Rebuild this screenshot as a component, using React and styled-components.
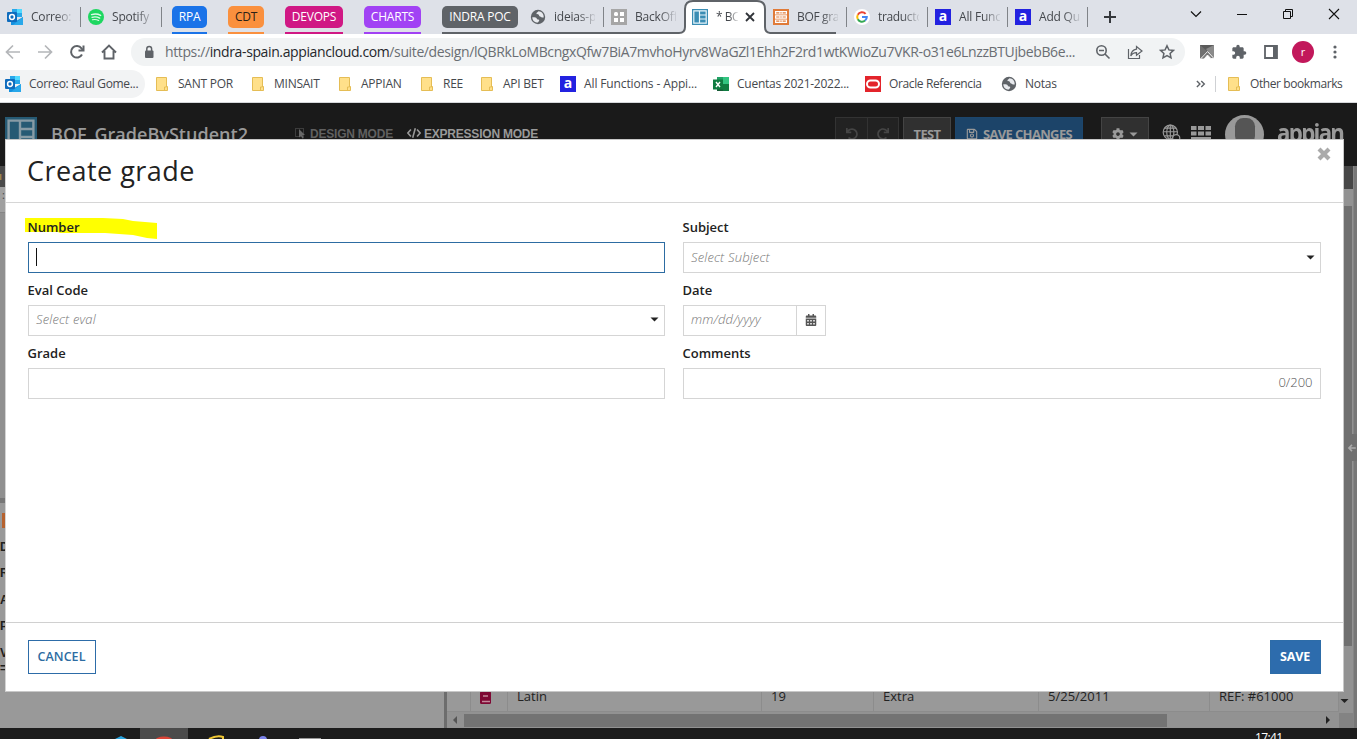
import React from "react";
import styled, { createGlobalStyle, css } from "styled-components";
import { FaCog, FaCalendarAlt, FaRegSave, FaUndo, FaRedo } from "react-icons/fa";
import { MdExtension } from "react-icons/md";

const Global = createGlobalStyle`
  * { box-sizing: border-box; }
  body { margin: 0; overflow: hidden; font-family: "Open Sans", "Liberation Sans", sans-serif; }
  svg { display: block; flex: none; }
  button, input { font-family: inherit; }
`;

const Window = styled.div`
  width: 1357px;
  height: 739px;
  display: flex;
  flex-direction: column;
  overflow: hidden;
  background: #fff;
`;

/* ---------- Browser chrome ---------- */

const TabStrip = styled.div`
  height: 34px;
  flex: none;
  display: flex;
  background: #dee1e8;
  color: #45484d;
`;

const Tab = styled.div`
  width: ${(p) => p.$w}px;
  height: 34px;
  flex: none;
  display: flex;
  gap: 8px;
  padding: 9px 0 0 ${(p) => p.$pl ?? 7}px;
  font-size: 12px;
  line-height: 16px;
  position: relative;
  ${(p) => p.$grouped && css`border-bottom: 2px solid #5f6368;`}
  ${(p) => p.$sep && css`
    &::after { content: ""; width: 1px; height: 20px; background: #808388; position: absolute; right: 0; top: 7px; }
  `}
`;

const TabTitle = styled.span`
  width: ${(p) => p.$w ?? 41}px;
  flex: none;
  overflow: hidden;
  white-space: nowrap;
  letter-spacing: ${(p) => p.$ls ?? -0.2}px;
  -webkit-mask-image: linear-gradient(90deg, #000 60%, transparent 105%);
  mask-image: linear-gradient(90deg, #000 60%, transparent 105%);
`;

const Group = styled.div`
  width: ${(p) => p.$w}px;
  height: 34px;
  flex: none;
  margin-left: ${(p) => p.$ml}px;
  padding-top: 6px;
  border-bottom: 2px solid ${(p) => p.$c};
`;

const GroupChip = styled.div`
  height: 22px;
  border-radius: 5px;
  background: ${(p) => p.$c};
  color: ${(p) => (p.$dark ? "#2c2115" : "#fff")};
  font-size: 12px;
  line-height: 22px;
  text-align: center;
  white-space: nowrap;
  letter-spacing: ${(p) => p.$ls ?? -0.22}px;
`;

const ActiveTab = styled.div`
  width: 92px;
  height: 34px;
  flex: none;
  position: relative;
  display: flex;
  gap: 8px;
  padding: 9px 0 0 14px;
  font-size: 12px;
  line-height: 16px;
  > :not(:first-child) { position: relative; }
  > :last-child { margin-left: -4px; }
`;

const TabShape = styled.svg`
  position: absolute;
  left: 0;
  top: 0;
`;

const WindowButtons = styled.div`
  display: flex;
  margin-left: 63px;
  padding-top: 6px;
  gap: 30px;
`;

const Toolbar = styled.div`
  height: 35px;
  flex: none;
  display: flex;
  align-items: center;
  padding: 1px 14px 0 5px;
`;

const NavIcons = styled.div`
  width: 126px;
  display: flex;
  gap: 16px;
`;

const Omnibox = styled.div`
  width: 1054px;
  height: 28px;
  flex: none;
  border-radius: 14px;
  background: #f1f3f4;
  display: flex;
  align-items: center;
  padding: 0 10px 0 10px;
`;

const Url = styled.div`
  width: 916px;
  margin-left: 8px;
  overflow: hidden;
  white-space: nowrap;
  font-size: 14px;
  line-height: 20px;
  color: #6a6e73;
  letter-spacing: ${(p) => p.$ls}px;
  b { font-weight: 400; color: #25272b; }
`;

const OmniActions = styled.div`
  display: flex;
  gap: 16px;
  margin-left: 14px;
`;

const Extensions = styled.div`
  display: flex;
  align-items: center;
  gap: 16px;
  margin-left: 14px;
`;

const Profile = styled.div`
  width: 22px;
  height: 22px;
  flex: none;
  margin: 0 -3px;
  border-radius: 50%;
  background: #c2185b;
  color: #fff;
  font-size: 11px;
  line-height: 21px;
  text-align: center;
`;

const Bookmarks = styled.div`
  height: 34px;
  flex: none;
  display: flex;
  align-items: flex-start;
  padding-top: 1px;
  border-bottom: 1px solid #d6d8db;
`;

const Bookmark = styled.div`
  width: ${(p) => p.$w}px;
  height: 28px;
  flex: none;
  display: flex;
  align-items: center;
  gap: ${(p) => p.$gap ?? 8}px;
  padding-left: 5px;
  padding-bottom: 1px;
  border-radius: 14px;
  color: #45484d;
  font-size: 12px;
  white-space: nowrap;
  letter-spacing: ${(p) => p.$ls ?? -0.25}px;
  ${(p) => p.$active && css`background: #f2f3f4; border-radius: 0 14px 14px 0; margin-right: 6px;`}
`;

const BookmarkDivider = styled.div`
  width: 1px;
  height: 16px;
  margin: 6px 7px 0 12px;
  background: #cfd1d4;
`;

/* ---------- Dimmed designer ---------- */

const Designer = styled.div`
  height: 625px;
  flex: none;
  position: relative;
  display: flex;
  flex-direction: column;
  background: #999;
`;

const DesignerHeader = styled.div`
  height: 63px;
  flex: none;
  display: flex;
  background: #1a1a1a;
  padding: 14px 14px 0 5px;
  color: #999;
`;

const ObjectName = styled.div`
  width: 257px;
  flex: none;
  padding: 4px 0 0 14px;
  font-size: 18px;
  line-height: 26px;
  font-weight: 600;
  letter-spacing: ${(p) => p.$ls ?? 0.03}px;
`;

const Mode = styled.div`
  display: flex;
  gap: 3px;
  width: ${(p) => p.$w}px;
  flex: none;
  padding-top: 9px;
  font: bold 12px/16px "Liberation Sans", Arial, sans-serif;
  letter-spacing: -0.22px;
  white-space: nowrap;
  color: ${(p) => (p.$on ? "#999" : "#606060")};
`;

const HeaderButton = styled.div`
  width: ${(p) => p.$w}px;
  height: 34px;
  flex: none;
  margin-left: ${(p) => p.$ml ?? 4}px;
  display: flex;
  align-items: center;
  justify-content: center;
  gap: 5px;
  border: 1px solid ${(p) => (p.$primary ? "#1c466d" : p.$muted ? "#333" : "#444")};
  background: ${(p) => (p.$primary ? "#1c4469" : p.$muted ? "#222" : "#303030")};
  color: ${(p) => (p.$muted ? "#454545" : "#999")};
  font-size: 13px;
  font-weight: 700;
  white-space: nowrap;
  letter-spacing: -0.65px;
`;

const HeaderIcons = styled.div`
  display: flex;
  margin-left: 13px;
  gap: 10px;
  > :first-child { margin-top: 7px; }
`;

const Avatar = styled.div`
  width: 39px;
  height: 39px;
  margin: -2px 3px 0 4px;
  flex: none;
  border-radius: 50%;
  background: #999;
  overflow: hidden;
  &::before {
    content: "";
    display: block;
    width: 20px;
    height: 28px;
    margin: 3px auto;
    border-radius: 10px 10px 12px 12px;
    background: #555;
  }
`;

const Brand = styled.div`
  font: bold 25px/30px "Open Sans", sans-serif;
  letter-spacing: -1.9px;
  margin-top: 0;
  transform: scaleX(0.89);
  transform-origin: left;
  width: 67px;
`;

const Workspace = styled.div`
  flex: 1;
  display: flex;
  min-height: 0;
`;

const LeftPane = styled.div`
  width: 444px;
  overflow: hidden;
`;

const PaneHeading = styled.div`
  height: 21px;
  background: #4a4a4a;
  color: #a58a4e;
  font: bold 9px/21px "Open Sans", sans-serif;
  text-indent: -1px;
`;

const Editor = styled.div`
  height: 316px;
  background: #909090;
  border-bottom: 5px solid #777;
  &::before { content: ":"; display: block; height: 25px; border-bottom: 1px solid #858585; background: #a0a0a0; font-size: 11px; padding-left: 2px; color: #444; }
`;

const Variables = styled.div`
  padding-top: 10px;
  font: bold 12px/26.4px "Liberation Sans", sans-serif;
  color: #202020;
  > :last-child { line-height: 4px; }
`;

const Marker = styled.div`
  width: 12px;
  height: 15px;
  margin: 0 0 6px 2px;
  background: #b6622f;
`;

const Splitter = styled.div`
  width: 3px;
  background: #6d6d6d;
`;

const RightPane = styled.div`
  flex: 1;
  display: flex;
  flex-direction: column;
  justify-content: flex-end;
`;

const TableRow = styled.div`
  height: 31px;
  display: flex;
  border-bottom: 1px solid #8c8c8c;
  color: #222;
  font-size: 13px;
`;

const Cell = styled.div`
  width: ${(p) => p.$w}px;
  padding: 6px 0 0 9px;
  line-height: 18px;
  border-right: 1px solid #8c8c8c;
`;

const HorizontalScroll = styled.div`
  height: 16px;
  display: flex;
  align-items: center;
  background: #929292;
  padding: 0 0 0 6px;
`;

const HorizontalThumb = styled.div`
  width: 703px;
  height: 13px;
  margin-left: 7px;
  margin-right: 159px;
  background: #737373;
`;

const VerticalScroll = styled.div`
  width: 14px;
  display: flex;
  flex-direction: column;
  background: #929292;
`;

const VerticalTop = styled.div`
  height: 23px;
  background: #474747;
`;

const VerticalThumb = styled.div`
  height: 440px;
  margin: 17px 1px 52px 0;
  background: #707070;
`;

const ScrollCorner = styled.div`
  flex: 1;
  margin-top: 8px;
  background: #838383;
`;

const SideRail = styled.div`
  width: 4px;
  background: #777;
  border-left: 1px solid #858585;
`;

const CollapseHandle = styled.div`
  position: absolute;
  right: 0;
  top: 331px;
  width: 14px;
  height: 27px;
  display: flex;
  align-items: center;
  justify-content: flex-end;
  background: #707070;
`;

/* ---------- Dialog ---------- */

const Dialog = styled.div`
  position: absolute;
  left: 5px;
  top: 36px;
  width: 1339px;
  height: 553px;
  display: flex;
  flex-direction: column;
  background: #fff;
  border: 1px solid #c8c8c8;
  border-left-color: #d4d4d4;
  color: #222;
`;

const DialogHeader = styled.div`
  height: 63px;
  flex: none;
  display: flex;
  justify-content: space-between;
  padding: 12px 12px 0 21px;
  border-bottom: 1px solid #d6d6d6;
`;

const Title = styled.h1`
  margin: 0;
  font-size: 27px;
  line-height: 38px;
  font-weight: 400;
  letter-spacing: ${(p) => p.$ls ?? 0.45}px;
`;

const CloseIcon = styled.svg`
  margin-top: -5px;
`;

const Form = styled.div`
  flex: 1;
  display: grid;
  grid-template-columns: 637px 638px;
  grid-auto-rows: 63px;
  column-gap: 18px;
  padding: 7px 22px 7px 21.5px;
`;

const Field = styled.div`
  position: relative;
`;

const Label = styled.label`
  display: block;
  position: relative;
  height: 32px;
  padding-top: 8px;
  font-size: 13px;
  line-height: 18px;
  font-weight: 600;
  color: #222;
`;

const Highlight = styled.svg`
  position: absolute;
  left: -4px;
  top: 6px;
`;

const Control = styled.div`
  width: ${(p) => p.$w ?? "100%"};
  height: 31px;
  display: flex;
  align-items: center;
  justify-content: space-between;
  padding: 0 ${(p) => (p.$select ? 5 : 7)}px ${(p) => (p.$raised ? 3 : 1)}px 7.5px;
  border: 1px solid ${(p) => (p.$focus ? "#2d6ca2" : "#d5d5d5")};
  font-size: 13px;
  color: #777;
`;

const Caret = styled.div`
  width: 1px;
  height: 18px;
  background: #111;
`;

const Placeholder = styled.span`
  font-style: italic;
  font-weight: 300;
  color: #777;
  letter-spacing: 0.18px;
`;

const Counter = styled.span`
  margin-left: auto;
  font-weight: 300;
  color: #555;
`;

const DateRow = styled.div`
  display: flex;
`;

const DateButton = styled.div`
  width: 30px;
  height: 31px;
  margin-left: -1px;
  padding-bottom: 2px;
  display: flex;
  align-items: center;
  justify-content: center;
  border: 1px solid #d5d5d5;
  color: #555;
`;

const DialogFooter = styled.div`
  height: 69px;
  flex: none;
  display: flex;
  justify-content: space-between;
  padding: 17px 22px 0;
  border-top: 1px solid #d0d0d0;
`;

const ActionButton = styled.button`
  width: ${(p) => p.$w}px;
  height: 34px;
  padding: 0 1px 2px 0;
  border: 1px solid #2d6ca8;
  background: ${(p) => (p.$primary ? "#2d6cad" : "#fff")};
  color: ${(p) => (p.$primary ? "#fff" : "#2d6ca2")};
  font-size: 12.5px;
  font-weight: ${(p) => (p.$primary ? 700 : 600)};
  letter-spacing: ${(p) => (p.$primary ? -0.1 : 0.05)}px;
`;

/* ---------- Taskbar ---------- */

const Taskbar = styled.div`
  height: 11px;
  flex: none;
  display: flex;
  background: #1c1c1c;
  overflow: hidden;
`;

const TaskIcons = styled.svg`
  margin-right: 905px;
`;

const Clock = styled.div`
  color: #fff;
  font-size: 12px;
  line-height: 18px;
  letter-spacing: -0.6px;
  padding-top: 1px;
`;

/* ---------- Icons ---------- */

const Outlook = () => (
  <svg width="16" height="16" viewBox="0 0 16 16">
    <path d="M5 0h10v8H5z" fill="#28a8ea" /><path d="M10 0h5v4h-5z" fill="#50d9ff" /><path d="M5 4h5v4H5z" fill="#0364b8" />
    <path d="M4 8l6 3.5L16 8v8H4z" fill="#1490df" /><path d="M16 8v8H6z" fill="#28a8ea" />
    <rect y="3" width="10" height="10" rx="1" fill="#0f6cbd" /><circle cx="5" cy="8" r="2.4" fill="none" stroke="#fff" strokeWidth="1.5" />
  </svg>
);
const SpotifyIcon = () => (
  <svg width="16" height="16" viewBox="0 0 16 16"><circle cx="8" cy="8" r="8" fill="#1ed760" />
    <g fill="none" stroke="#dff9e8" strokeLinecap="round"><path d="M3.6 5.6c3-.9 6.500-.6 9 .8" strokeWidth="1.5" /><path d="M4 8.300c2.600-.7 5.500-.4 7.700.8" strokeWidth="1.300" /><path d="M4.400 10.800c2.200-.5 4.400-.3 6.300.7" strokeWidth="1.100" /></g>
  </svg>
);
const Globe = () => (
  <svg width="16" height="16" viewBox="0 0 16 16"><circle cx="8" cy="8" r="7.200" fill="#5f6368" />
    <path d="M2.300 8.200h2.200c1.500 0 2.300.8 2.600 2l2 .6c.5 1-.4 1.600-1.200 2.800C4.700 13.600 2.400 11.500 2.300 8.200z" fill="#e8eaee" />
    <path d="M8.500 2.300C7.500 3.500 6.300 3.500 6.500 5c.8.500 2 0 2.500 1.200 0 1.300 1.800 1.200 2.400 2 .7.500 1.300.4 2.300.3C14 5 11.500 2.400 8.500 2.300z" fill="#e8eaee" /></svg>
);
const Folder = () => (
  <svg width="12" height="14" viewBox="0 0 12 14"><path d="M.5.500h10v9h1v4H.5z" fill="#ffe08a" stroke="#e5bd55" /><path d="M8.500 13.500v-3.500h2V1" fill="none" stroke="#e5bd55" /></svg>
);
const LetterBadge = styled.span`
  width: 16px;
  height: 16px;
  flex: none;
  background: #2322e0;
  color: #fff;
  font: bold 14px/14px "Open Sans", sans-serif;
  text-align: center;
  letter-spacing: 0;
`;
const Excel = () => (
  <svg width="16" height="16" viewBox="0 0 16 16"><path d="M4 1h6v7H4z" fill="#21a366" /><path d="M10 1h6v7h-6z" fill="#33c481" /><path d="M4 8h6v7H4z" fill="#185c37" /><path d="M10 8h6v7h-6z" fill="#107c41" /><rect y="3.500" width="10" height="10" fill="#107c41" /><path d="M3 6l4 5M7 6l-4 5" stroke="#fff" strokeWidth="1.400" /></svg>
);
const Oracle = () => (
  <svg width="16" height="16" viewBox="0 0 16 16"><rect width="16" height="16" fill="#e3242b" /><rect x="2" y="4.500" width="12" height="7" rx="3.500" fill="none" stroke="#fff" strokeWidth="2" /></svg>
);
const PageIcon = ({ size = 16, fg = "#e9f6fb", bg = "#3a8db4" }) => (
  <svg width={size} height={size} viewBox="0 0 16 16"><rect width="16" height="16" fill={bg} /><path fill="none" stroke={fg} strokeWidth="1.200" d="M1.800 1.800h12.400v12.400H1.800zM7.500 2v12M7.500 6h6.500M7.500 10h6.500" /></svg>
);
const SiteIcon = () => (
  <svg width="16" height="16" viewBox="0 0 16 16"><rect width="16" height="16" fill="#a6a6a6" /><rect x="3" y="3" width="4" height="4" rx="1.500" fill="#fff" /><path fill="#fff" d="M9 3h4v4H9zM3 9h4v4H3zM9 9h4v4H9z" /></svg>
);
const RecordIcon = () => (
  <svg width="16" height="16" viewBox="0 0 16 16"><rect width="16" height="16" fill="#e07b39" /><path fill="#fff" d="M2 2h12v3.600H2zM2 6.200h12v3.600H2zM2 10.400h12V14H2z" /><path stroke="#e07b39" strokeWidth="1.200" d="M3.200 3.800h3.200M7.300 3.800h1.400M9.600 3.800h3.200M3.200 8h3.200M7.300 8h1.400M9.600 8h3.200M3.200 12.200h3.200M7.300 12.200h1.400M9.600 12.200h3.200" /></svg>
);
const GoogleIcon = () => (
  <svg width="16" height="16" viewBox="0 0 16 16"><circle cx="8" cy="8" r="8" fill="#fff" /><g fill="none" strokeWidth="2"><path d="M11.600 4.800A4.800 4.800 0 0 0 3.800 5.700" stroke="#ea4335" /><path d="M3.800 5.700a4.800 4.800 0 0 0 0 4.600" stroke="#fbbc05" /><path d="M3.800 10.300a4.800 4.800 0 0 0 7.300 1.300" stroke="#34a853" /><path d="M11.100 11.600A4.800 4.800 0 0 0 12.800 8H8" stroke="#4285f4" /></g></svg>
);
const Line = ({ d, size = 16, w = 2, c = "#5f6368", children }) => (
  <svg width={size} height={size} viewBox="0 0 16 16" fill="none" stroke={c} strokeWidth={w}><path d={d} />{children}</svg>
);
const Down = ({ c = "#222" }) => <svg width="9" height="5" viewBox="0 0 9 5"><path d="M.5.500h8l-4 4z" fill={c} /></svg>;

const groups = [
  { name: "RPA", w: 35, ml: 10, c: "#1a73e8" },
  { name: "CDT", w: 36, ml: 21, c: "#fa903e", dark: true },
  { name: "DEVOPS", w: 58, ml: 21, c: "#d01884" },
  { name: "CHARTS", w: 57, ml: 21, c: "#a142f4" },
  { name: "INDRA POC", w: 76, ml: 21, c: "#5f6368" },
];

const folders = [
  ["SANT POR", 96], ["MINSAIT", 87], ["APPIAN", 82], ["REE", 60], ["API BET", 79],
];

export default function App() {
  return (
    <Window>
      <Global />
      <TabStrip>
        <Tab $w={81} $sep><Outlook /><TabTitle>Correo:</TabTitle></Tab>
        <Tab $w={81} $sep><SpotifyIcon /><TabTitle>Spotify</TabTitle></Tab>
        {groups.map((g) => (
          <Group key={g.name} $w={g.w} $ml={g.ml} $c={g.c}>
            <GroupChip $c={g.c} $dark={g.dark}>{g.name}</GroupChip>
          </Group>
        ))}
        <Tab $w={86} $pl={12} $sep $grouped><Globe /><TabTitle>ideias-p</TabTitle></Tab>
        <Tab $w={74} $grouped><SiteIcon /><TabTitle>BackOff</TabTitle></Tab>
        <ActiveTab>
          <TabShape width="92" height="34" viewBox="0 0 92 34">
            <path d="M0 33h1q6 0 6-6V9q0-8 8-8h64q8 0 8 8v18q0 6 6 6v1H0z" fill="#fff" />
            <path d="M0 33h1q6 0 6-6V9q0-8 8-8h64q8 0 8 8v18q0 6 6 6" fill="none" stroke="#5f6368" strokeWidth="2" />
          </TabShape>
          <PageIcon /><TabTitle $w={22} $ls={-0.5}>* BC</TabTitle>
          <Line d="M4 4l8 8M12 4l-8 8" w={1.8} c="#303338" />
        </ActiveTab>
        <Tab $w={66} $pl={3} $grouped><RecordIcon /><TabTitle $ls={-0.35}>BOF gra</TabTitle></Tab>
        <Tab $w={11} $sep />
        <Tab $w={81} $sep><GoogleIcon /><TabTitle $ls={-0.35}>traducto</TabTitle></Tab>
        <Tab $w={80} $sep><LetterBadge>a</LetterBadge><TabTitle>All Func</TabTitle></Tab>
        <Tab $w={80} $sep><LetterBadge>a</LetterBadge><TabTitle>Add Qu</TabTitle></Tab>
        <Tab $w={37} $pl={14}><Line d="M8 2v12M2 8h12" c="#35383c" /></Tab>
        <WindowButtons>
          <Line d="M3 5.500l5 5 5-5" w={1.200} c="#111" />
          <Line d="M3 8.500h10" w={1} c="#111" />
          <Line d="M3.500 5.500h7v7h-7zM5.500 5V3.500h7v7H11" w={1} c="#111" />
          <Line d="M3 3l10 10M13 3L3 13" w={1.100} c="#111" />
        </WindowButtons>
      </TabStrip>

      <Toolbar>
        <NavIcons>
          <Line d="M15 8H2M8 1.500L1.500 8 8 14.500" w={1.700} c="#b4b6b9" />
          <Line d="M1 8h13M8 1.500L14.500 8 8 14.500" w={1.700} c="#b4b6b9" />
          <Line d="M13 10.500A5.800 5.800 0 1 1 12.500 4.300L14 6.500"><path d="M14.500 1.500v5h-5" /></Line>
          <Line d="M1 8.500L8 1.500l7 7M3.500 7v7.500h9V7" w={1.900} />
        </NavIcons>
        <Omnibox>
          <svg width="16" height="16" viewBox="0 0 16 16"><rect x="4" y="6.500" width="8.500" height="7.500" rx="1" fill="#5f6368" /><path d="M5.800 7V4.800a2.400 2.400 0 0 1 4.800 0V7" fill="none" stroke="#5f6368" strokeWidth="1.500" /></svg>
          <Url $ls={-0.38}>https://<b>indra-spain.appiancloud.com</b>/suite/design/lQBRkLoMBcngxQfw7BiA7mvhoHyrv8WaGZl1Ehh2F2rd1wtKWioZu7VKR-o31e6LnzzBTUjbebB6e...</Url>
          <OmniActions>
            <Line d="M10 10l4.500 4.500M4 6.500h5" w={1.600}><circle cx="6.500" cy="6.500" r="4.700" /></Line>
            <Line d="M1.500 5v9.500h11V11M9.500 5.200V2.500l5.500 4.500-5.500 4.200V8.700C7 8.700 5 9.500 3.800 12c.3-4 2.200-6.300 5.700-6.800z" w={1.200} />
            <Line d="M8 1.800l1.900 4.100 4.500.5-3.300 3 .9 4.400L8 11.600l-4 2.200.9-4.400-3.300-3 4.500-.5z" w={1.500} />
          </OmniActions>
        </Omnibox>
        <Extensions>
          <svg width="16" height="16" viewBox="0 0 16 16"><path d="M1 1h14v4L8 9l-7 6z" fill="#707070" /><path d="M1 1h14L8 7z" fill="#5a5a5a" /><path d="M7 5l8-4v14z" fill="#8a8a8a" /><path d="M1.500 15L8.500 7.500 15 14.500h-3L8.500 11 5 15z" fill="#777" stroke="#fff" strokeWidth=".8" /></svg>
          <MdExtension size={16} color="#5f6368" />
          <svg width="16" height="16" viewBox="0 0 16 16"><path d="M2 2h12v12H2z" fill="none" stroke="#5f6368" strokeWidth="1.800" /><path d="M10 2h4v12h-4z" fill="#5f6368" /></svg>
          <Profile>r</Profile>
          <svg width="16" height="16" viewBox="0 0 16 16" fill="#5f6368"><circle cx="8" cy="3" r="1.600" /><circle cx="8" cy="8" r="1.600" /><circle cx="8" cy="13" r="1.600" /></svg>
        </Extensions>
      </Toolbar>

      <Bookmarks>
        <Bookmark $w={145} $active $ls={-0.32}><Outlook />Correo: Raul Gome...</Bookmark>
        {folders.map(([name, w]) => <Bookmark key={name} $w={w} $gap={10}><Folder />{name}</Bookmark>)}
        <Bookmark $w={153} $ls={-0.12}><LetterBadge>a</LetterBadge>All Functions - Appi...</Bookmark>
        <Bookmark $w={152}><Excel />Cuentas 2021-2022...</Bookmark>
        <Bookmark $w={136} $ls={-0.37}><Oracle />Oracle Referencia</Bookmark>
        <Bookmark $w={195}><Globe />Notas</Bookmark>
        <Bookmark $w={12}><Line size={14} d="M1 4.500L4.500 8 1 11.500M6 4.500L9.500 8 6 11.500" w={1.600} /></Bookmark>
        <BookmarkDivider />
        <Bookmark $w={130} $gap={10} $ls={-0.41}><Folder />Other bookmarks</Bookmark>
      </Bookmarks>

      <Designer>
        <DesignerHeader>
          <PageIcon size={32} fg="#879ba5" bg="#265a74" />
          <ObjectName>BOF_GradeByStudent2</ObjectName>
          <Mode $w={113}>
            <svg width="13" height="14" viewBox="0 0 13 14"><path d="M1.500 2.500h8v8h-8z" fill="none" stroke="#606060" strokeDasharray="1 1" /><path d="M5 3l6 6H8.500l1.300 3-1.500.6L7 10l-2 1.500z" fill="#686868" /></svg>DESIGN MODE
          </Mode>
          <Mode $w={426} $on>
            <Line d="M4.500 4L1 8l3.500 4M11.500 4L15 8l-3.500 4M9.500 2.500l-3 11" size={14} w={1.800} c="#999" />EXPRESSION MODE
          </Mode>
          <HeaderButton $w={33} $ml={2} $muted><FaUndo size={12} /></HeaderButton>
          <HeaderButton $w={32} $ml={-1} $muted><FaRedo size={12} /></HeaderButton>
          <HeaderButton $w={48}>TEST</HeaderButton>
          <HeaderButton $w={128} $primary><FaRegSave size={12} />SAVE CHANGES</HeaderButton>
          <HeaderButton $w={48} $ml={18}><FaCog size={12} /><Down c="#999" /></HeaderButton>
          <HeaderIcons>
            <Line d="M1 6.500h12M7 1v12M2 3.500h10M2 10h8" size={19} w={1} c="#999"><circle cx="7" cy="7" r="6" /><ellipse cx="7" cy="7" rx="3" ry="6" /><circle cx="12" cy="12" r="3" fill="#1a1a1a" /></Line>
            <svg width="20" height="30" viewBox="0 0 20 30" fill="#999"><path d="M0 9h5.500v4H0zM7 9h6v4H7zM14.500 9H20v4h-5.500zM0 14.500h5.500v4H0zM7 14.500h6v4H7zM14.500 14.500H20v4h-5.500zM0 20h20v3H0z" /></svg>
            <Avatar />
            <Brand>appian</Brand>
          </HeaderIcons>
        </DesignerHeader>
        <Workspace>
          <LeftPane>
            <PaneHeading>I</PaneHeading>
            <Editor />
            <Variables><Marker /><div>D</div><div>R</div><div>A</div><div>P</div><div>V</div><div>=</div></Variables>
          </LeftPane>
          <Splitter />
          <RightPane>
            <TableRow>
              <Cell $w={24} />
              <Cell $w={37}>
                <svg width="12" height="18" viewBox="0 0 12 18"><rect x="0" y="4" width="11" height="13" rx="1.500" fill="#7e0934" /><path d="M3 9h5M2 14.500h8" stroke="#c38a9b" strokeWidth="1.300" /></svg>
              </Cell>
              <Cell $w={254}>Latin</Cell><Cell $w={112}>19</Cell><Cell $w={165}>Extra</Cell><Cell $w={171}>5/25/2011</Cell><Cell $w={129}>REF: #61000</Cell>
            </TableRow>
            <HorizontalScroll>
              <svg width="4" height="8" viewBox="0 0 4 8"><path d="M4 0v8L0 4z" fill="#555" /></svg>
              <HorizontalThumb />
              <svg width="4" height="8" viewBox="0 0 4 8"><path d="M0 0v8l4-4z" fill="#222" /></svg>
            </HorizontalScroll>
          </RightPane>
          <VerticalScroll>
            <VerticalTop /><VerticalThumb />
            <svg width="12" height="7" viewBox="0 0 12 7"><path d="M1.500 1h8l-4 4z" fill="#222" /></svg>
            <ScrollCorner />
          </VerticalScroll>
          <SideRail />
        </Workspace>
        <CollapseHandle><Line d="M14 8H3M8 3L3 8l5 5" size={10} w={2.500} c="#aaa" /></CollapseHandle>

        <Dialog role="dialog">
          <DialogHeader>
            <Title>Create grade</Title>
            <CloseIcon width="14" height="14" viewBox="0 0 14 14"><path d="M2 2l10 10M12 2L2 12" stroke="#aaa" strokeWidth="4.200" /></CloseIcon>
          </DialogHeader>
          <Form>
            <Field>
              <Highlight width="134" height="24" viewBox="0 0 134 24"><path d="M1 2h78l20 1 10 2 24 2v16l-10-1-14-3-28-2H36l-2-1H1z" fill="#ff0" /></Highlight>
              <Label>Number</Label>
              <Control $focus><Caret /></Control>
            </Field>
            <Field>
              <Label>Subject</Label>
              <Control $select><Placeholder>Select Subject</Placeholder><Down /></Control>
            </Field>
            <Field>
              <Label>Eval Code</Label>
              <Control $select $raised><Placeholder>Select eval</Placeholder><Down /></Control>
            </Field>
            <Field>
              <Label>Date</Label>
              <DateRow>
                <Control $w="114px" $raised><Placeholder>mm/dd/yyyy</Placeholder></Control>
                <DateButton><FaCalendarAlt size={12} /></DateButton>
              </DateRow>
            </Field>
            <Field><Label>Grade</Label><Control /></Field>
            <Field><Label>Comments</Label><Control $raised><Counter>0/200</Counter></Control></Field>
          </Form>
          <DialogFooter>
            <ActionButton $w={68}>CANCEL</ActionButton>
            <ActionButton $w={51} $primary>SAVE</ActionButton>
          </DialogFooter>
        </Dialog>
      </Designer>

      <Taskbar>
        <TaskIcons width="350" height="11" viewBox="0 0 350 11">
          <path d="M140 0h48v11h-48z" fill="#4b4b4b" /><path d="M115 11l6-3 6 3z" fill="#2aa5e0" /><ellipse cx="164" cy="13" rx="9" ry="4.500" fill="#db4437" />
          <path d="M209 11q8-4 14-2v2" fill="none" stroke="#f2c935" strokeWidth="2" /><circle cx="263" cy="12" r="4" fill="#7b83eb" /><path d="M299 10h22v1h-22z" fill="#999" />
        </TaskIcons>
        <Clock>17:41</Clock>
      </Taskbar>
    </Window>
  );
}
